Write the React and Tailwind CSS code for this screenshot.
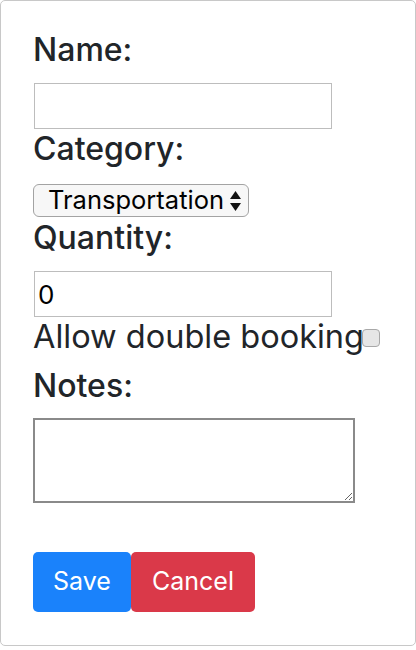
import React from 'react';

function SelectArrows() {
  return (
    <svg width="13" height="22" viewBox="0 0 13 22" className="ml-[5px]">
      <path d="M6.5 1 L12 9 L1 9 Z" fill="#111" />
      <path d="M1 13 L12 13 L6.5 21 Z" fill="#111" />
    </svg>
  );
}

export default function App() {
  return (
    <div className="w-[416px] h-[650px] bg-white" style={{ fontFamily: 'Inter, "Noto Sans", sans-serif' }}>
      <div className="w-[416px] h-[646px] border border-[#c8c8c8] rounded-[5px] pl-[32px] pt-[29px] text-[#212529]">
        <label className="block text-[32px] leading-[40px] font-medium">Name:</label>
        <input
          type="text"
          className="block mt-[13px] ml-px w-[298px] h-[46px] border border-[#bdbdbd] bg-white outline-none px-1"
        />

        <label className="block text-[32px] leading-[40px] font-medium">Category:</label>
        <div className="mt-[15px] inline-flex items-center h-[33px] border border-[#a3a3a3] rounded-[6px] bg-[#f7f7f7] pl-[14px] pr-[6px] text-[25.5px] text-black">
          <span>Transportation</span>
          <SelectArrows />
        </div>

        <label className="block mt-px text-[32px] leading-[40px] font-medium">Quantity:</label>
        <input
          type="text"
          defaultValue="0"
          className="block mt-[13px] ml-px w-[298px] h-[46px] border border-[#bdbdbd] bg-white outline-none pl-[3px] text-[26px] text-black"
        />

        <div className="flex items-center h-[40px]">
          <span className="text-[32.5px] leading-[40px]">Allow double booking</span>
          <span className="w-[18px] h-[18px] mt-[2px] -ml-[2px] rounded-[4px] border border-[#a8a8a8] bg-[#e6e6e6]"></span>
        </div>

        <label className="block mt-[9px] text-[32px] leading-[40px] font-medium">Notes:</label>
        <textarea className="block mt-[12px] w-[322px] h-[85px] border-2 border-[#8a8a8a] bg-white outline-none"></textarea>

        <div className="flex mt-[49px]">
          <button className="h-[60px] w-[98px] rounded-[5px] bg-[#1a82fb] text-white text-[25px]">Save</button>
          <button className="h-[60px] w-[124px] rounded-[5px] bg-[#da3949] text-white text-[25px]">Cancel</button>
        </div>
      </div>
    </div>
  );
}
